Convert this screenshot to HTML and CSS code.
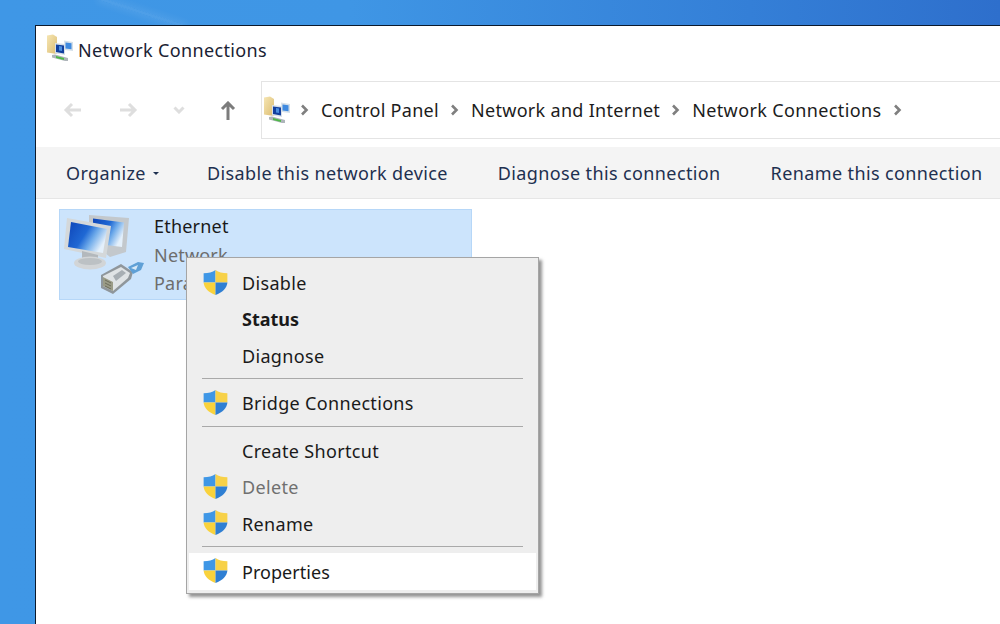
FILE: index.html
```html
<!DOCTYPE html>
<html lang="en">
<head>
<meta charset="utf-8">
<title>Network Connections</title>
<link rel="stylesheet" href="styles.css">
</head>
<body>
<svg class="defs" width="0" height="0" aria-hidden="true">
  <defs>
    <linearGradient id="scr" x1="0" y1="0" x2="1" y2="0.5">
      <stop offset="0" stop-color="#0e45b8"/><stop offset=".5" stop-color="#1f68d4"/><stop offset=".72" stop-color="#6fabea"/><stop offset="1" stop-color="#e4f0fb"/>
    </linearGradient>
    <linearGradient id="folder" x1="0" y1="0" x2="1" y2="1">
      <stop offset="0" stop-color="#f6e6b4"/><stop offset="1" stop-color="#dcbd72"/>
    </linearGradient>
    <symbol id="shield" viewBox="0 0 24 24">
      <path d="M12 0C9 2.100 5.500 3 .600 3.200V12H12Z" fill="#3f97e6"/>
      <path d="M12 0C15 2.100 18.500 3 23.400 3.200V12H12Z" fill="#f7d148"/>
      <path d="M.600 12C1 17.500 5.500 21.500 12 24V12Z" fill="#f9d23c"/>
      <path d="M23.400 12C23 17.500 18.500 21.500 12 24V12Z" fill="#2f7fd3"/>
    </symbol>
    <symbol id="netfolder" viewBox="0 0 28 28">
      <path d="M2 1.500 8 .500 12 3V20L2 18.500Z" fill="url(#folder)"/>
      <path d="M10 9 20 10V21L10 19.500Z" fill="#d8e0e8"/>
      <path d="M11 10.500 19 11.500V19.500L11 18Z" fill="#123f9e"/>
      <path d="M14 12 17 12.500V17L14 16.500Z" fill="#4c8fe0"/>
      <path d="M19 6.500 28 8V17L20 16Z" fill="#d4dfe9"/>
      <path d="M20.500 8.500 26.500 9.300V15.300L20.500 14.500Z" fill="#3f8ae0"/>
      <path d="M7 21 10 20.500 23 24V27L20 27 7 23.500Z" fill="#aeb5ba"/>
      <path d="M11 22 19 24V26L11 24Z" fill="#4fb948"/>
    </symbol>
  </defs>
</svg>
<main class="desktop">
  <div class="streak"></div>
  <section class="window">
    <header class="titlebar">
      <svg class="title-icon"><use href="#netfolder"/></svg>
      <span class="title">Network Connections</span>
    </header>
    <div class="navbar">
      <div class="nav-buttons">
        <svg class="nav-arrow" viewBox="0 0 20 16"><path d="M9 2 3 8l6 6M3 8h15" class="stroke-off"/></svg>
        <svg class="nav-arrow" viewBox="0 0 20 16"><path d="M11 2l6 6-6 6M17 8H2" class="stroke-off"/></svg>
        <svg class="nav-down" viewBox="0 0 12 8"><path d="M1.500 1.500 6 6l4.500-4.500" class="stroke-off"/></svg>
        <svg class="nav-up" viewBox="0 0 16 20"><path d="M2 8l6-6 6 6M8 2v17" class="stroke-on"/></svg>
      </div>
      <div class="address">
        <svg class="addr-icon"><use href="#netfolder"/></svg>
        <svg class="chev"><path d="M2 1.500 6.500 6 2 10.500"/></svg>
        <span class="crumb">Control Panel</span>
        <svg class="chev"><path d="M2 1.500 6.500 6 2 10.500"/></svg>
        <span class="crumb">Network and Internet</span>
        <svg class="chev"><path d="M2 1.500 6.500 6 2 10.500"/></svg>
        <span class="crumb crumb-last">Network Connections</span>
        <svg class="chev"><path d="M2 1.500 6.500 6 2 10.500"/></svg>
      </div>
    </div>
    <nav class="toolbar">
      <span class="tool organize">Organize<i class="caret"></i></span>
      <span class="tool">Disable this network device</span>
      <span class="tool">Diagnose this connection</span>
      <span class="tool">Rename this connection</span>
    </nav>
    <div class="content">
      <div class="item">
        <svg class="item-icon" viewBox="0 0 90 90">
          <path d="M29 5 69 8 66 42 50 47 29 30Z" fill="#c3c8cc"/>
          <path d="M33 8.500 64 12.500 62 37 46 35 33 20Z" fill="url(#scr)"/>
          <path d="M7 8 51 16 46 48 4 39Z" fill="#d4d8da"/>
          <path d="M11 12 47 19 43 43 8 37Z" fill="url(#scr)"/>
          <path d="M22 41 38 45 38 51 22 49Z" fill="#b3b8bc"/>
          <ellipse cx="30" cy="53" rx="16" ry="6.500" fill="#d2d5d7"/>
          <ellipse cx="30" cy="51.500" rx="12" ry="3.500" fill="#bcc1c4"/>
          <path d="M41 65 61 54 73 62 71 69 53 84 41 78Z" fill="#8f969b"/>
          <path d="M43 66 61 57 70 63 68 68 53 81 43 76Z" fill="#dfe3e5"/>
          <path d="M43 67 53 72 53 81 43 76Z" fill="#9a9b86"/>
          <path d="M45 70 51 73M45 73 51 76M45 76 51 79" stroke="#6c6c5c" stroke-width="1" fill="none"/>
          <path d="M53 66 62 60 66 63 56 71Z" fill="#a7aeb3"/>
          <path d="M68 57 78 52 84 53 81 60 73 64Z" fill="#5fa0d6"/>
          <path d="M71 58 78 55 76 60Z" fill="#d7e8f6"/>
        </svg>
        <div class="item-text">
          <span class="item-name">Ethernet</span>
          <span class="item-sub">Network</span>
          <span class="item-sub">Parallels Ethernet</span>
        </div>
      </div>
    </div>
    <ul class="menu">
      <li class="row"><svg class="shield"><use href="#shield"/></svg>Disable</li>
      <li class="row bold">Status</li>
      <li class="row">Diagnose</li>
      <li class="sep"></li>
      <li class="row"><svg class="shield"><use href="#shield"/></svg>Bridge Connections</li>
      <li class="sep"></li>
      <li class="row">Create Shortcut</li>
      <li class="row muted"><svg class="shield"><use href="#shield"/></svg>Delete</li>
      <li class="row"><svg class="shield"><use href="#shield"/></svg>Rename</li>
      <li class="sep"></li>
      <li class="row hover"><svg class="shield"><use href="#shield"/></svg>Properties</li>
    </ul>
  </section>
</main>
</body>
</html>
```
FILE: styles.css
```css
* { box-sizing: border-box; }
html, body { margin: 0; height: 100%; }
body { overflow: hidden; font-family: "Noto Sans", "Open Sans", sans-serif; }
.defs { position: absolute; }
.desktop {
  position: relative;
  width: 1000px; height: 624px; overflow: hidden;
  padding: 25px 0 0 35px;
  background: linear-gradient(90deg, #3f97e6 0%, #3f96e5 35%, #347fd7 75%, #2e6fcc 100%);
}
.streak {
  position: absolute; left: 98px; top: 11px;
  width: 88px; height: 3px;
  background: rgba(255,255,255,.08);
  transform: rotate(18deg);
  box-shadow: 0 0 6px 3px rgba(255,255,255,.07);
}
.window {
  position: relative;
  width: 1000px; height: 640px;
  background: #fff;
  border: 1px solid #0c1a2c;
  border-right: 0; border-bottom: 0;
}
.titlebar { display: flex; align-items: center; height: 48px; padding-left: 9px; gap: 5px; }
.title-icon { width: 28px; height: 28px; margin-bottom: 4px; }
.title { font-size: 18px; letter-spacing: .36px; color: #1a2233; }
.navbar { display: flex; height: 73px; padding-top: 7px; }
.nav-buttons { display: flex; align-items: center; width: 225px; padding-left: 27px; height: 58px; }
.nav-arrow { width: 20px; height: 16px; margin-right: 35px; }
.nav-down { width: 12px; height: 8px; margin: 0 35px 0 0; }
.nav-up { width: 16px; height: 20px; margin-top: 2px; }
.stroke-off { fill: none; stroke: #dedede; stroke-width: 3; }
.stroke-on { fill: none; stroke: #7c7c7c; stroke-width: 3; }
.address {
  display: flex; align-items: center;
  flex: 1; height: 58px;
  border: 1px solid #e4e4e4; border-right: 0;
  font-size: 18px; letter-spacing: .3px; color: #1c1c1c;
}
.addr-icon { width: 28px; height: 28px; margin-right: 10px; }
.chev { width: 9px; height: 12px; margin-right: 12px; fill: none; stroke: #7f7f7f; stroke-width: 2.600; }
.crumb { margin-right: 11px; }
.crumb-last { letter-spacing: .38px; }
.toolbar {
  display: flex; align-items: center; height: 52px;
  padding: 1px 0 0 30px; gap: 50px;
  background: #f4f4f4;
  border-bottom: 1px solid #e6e6e6;
  font-size: 18px; letter-spacing: .38px; color: #1e3050;
  white-space: nowrap;
}
.organize { display: flex; align-items: center; margin-right: -2px; }
.caret {
  margin-left: 7px; margin-top: 1px;
  border: 3px solid transparent; border-top: 3px solid #1e3050; border-bottom: 0;
}
.content { padding: 10px 0 0 23px; }
.item {
  display: flex; width: 413px; height: 91px;
  background: #cce4fc; border: 1px solid #b6d7f8;
}
.item-icon { width: 90px; height: 90px; flex: none; }
.item-text { display: flex; flex-direction: column; padding: 2px 0 0 4px; font-size: 18px; letter-spacing: .2px; line-height: 28.500px; }
.item-name { color: #1a1a1a; }
.item-sub { color: #6d6d6d; white-space: nowrap; }
.menu {
  position: absolute; left: 150px; top: 231px;
  width: 353px; height: 337px;
  margin: 0; padding: 7px 2px 3px;
  list-style: none;
  background: #eeeeee;
  border: 1px solid #a5a5a5;
  box-shadow: 3px 3px 3px rgba(60,60,60,.55);
  font-size: 18px; letter-spacing: .33px; color: #1a1a1a;
}
.row { position: relative; display: flex; align-items: center; height: 36.400px; padding-left: 53px; }
.shield { position: absolute; left: 14px; top: 5px; width: 25px; height: 25px; }
.bold { font-weight: 700; letter-spacing: 0; padding-bottom: 2px; }
.muted { color: #707070; }
.sep { height: 1px; background: #a9a9a9; margin: 4px 13px 6px; }
.hover { background: #fff; height: 37.400px; padding-top: 1px; letter-spacing: .05px; }
```
